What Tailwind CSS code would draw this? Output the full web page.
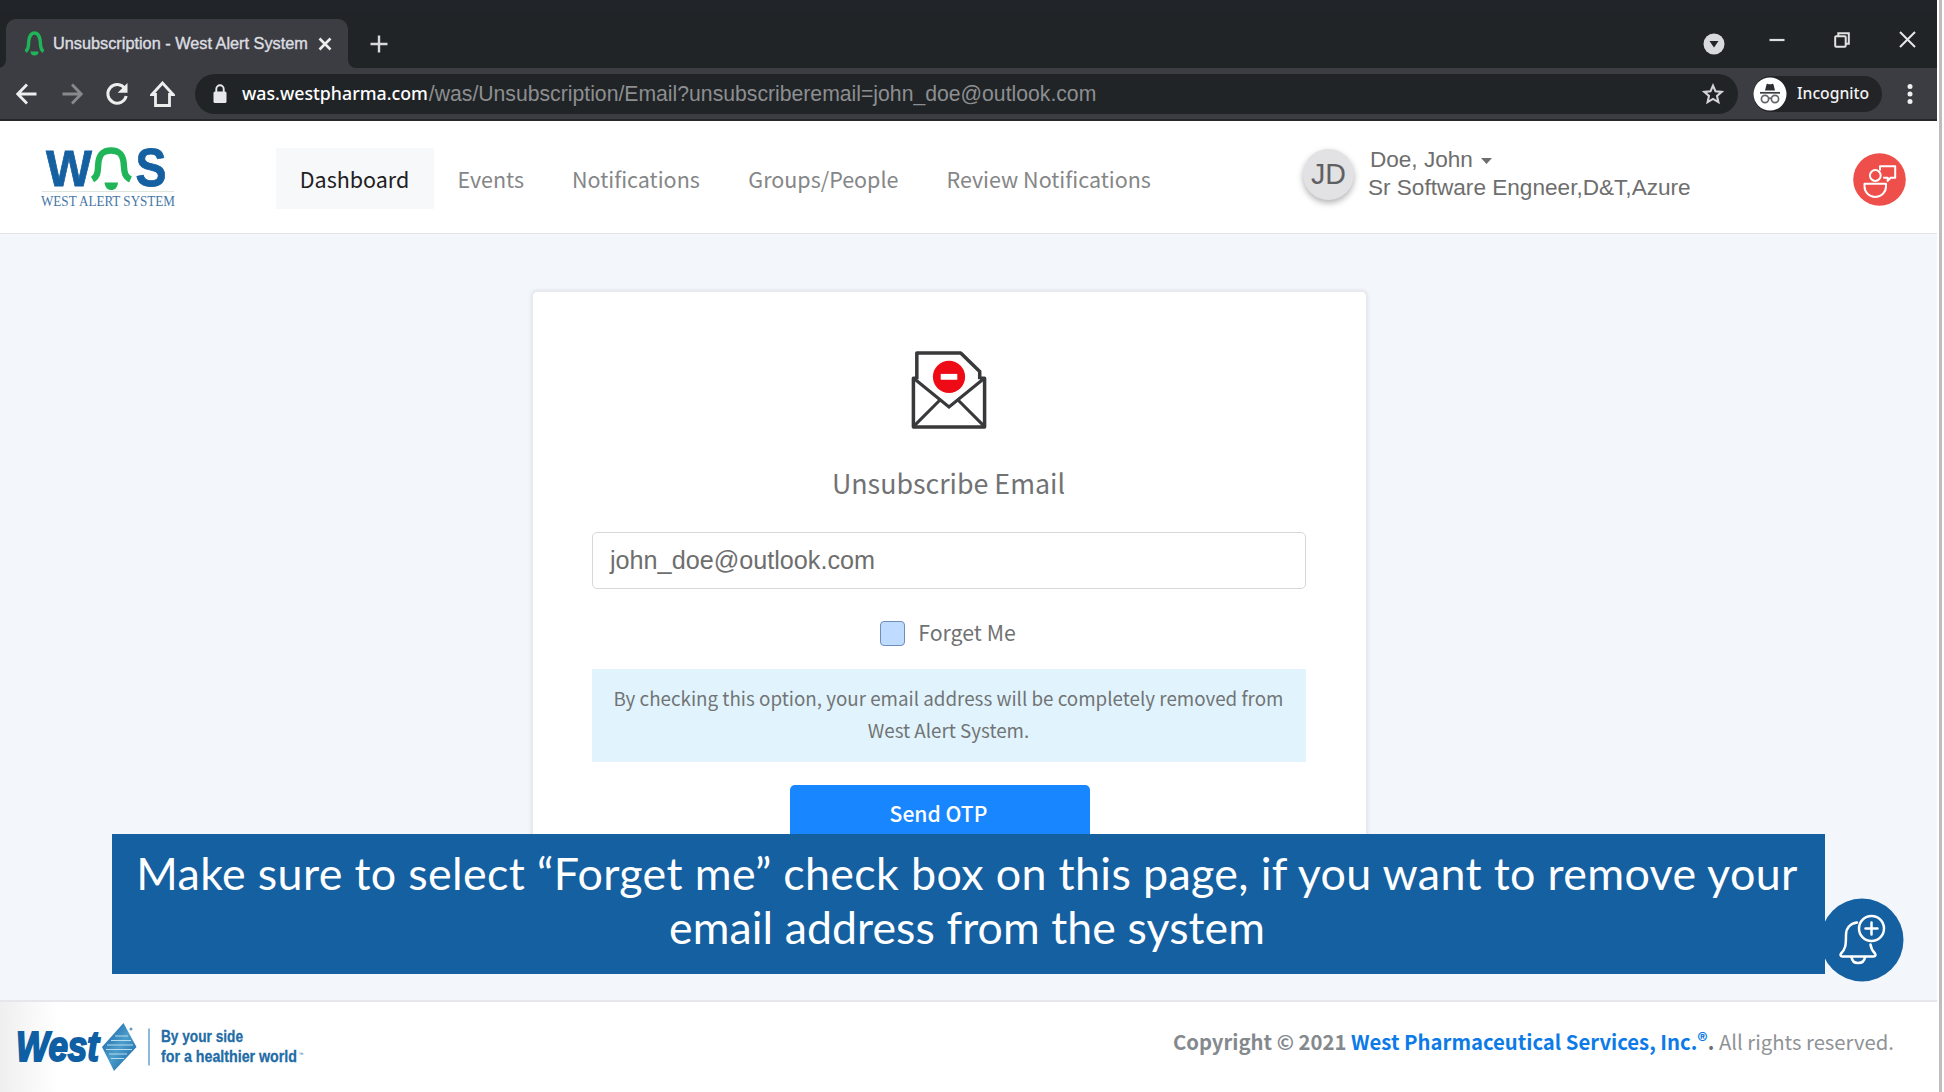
<!DOCTYPE html>
<html lang="en">
<head>
<meta charset="utf-8">
<title>Unsubscription - West Alert System</title>
<script src="https://cdn.jsdelivr.net/npm/@tailwindcss/browser@4"></script>
</head>
<body class="bg-white overflow-hidden font-['Noto_Sans_CJK_SC',sans-serif]">
<div class="relative flex h-[1092px] w-[1944px]">
<div class="flex h-full w-[1937px] flex-col">

  <!-- tab strip -->
  <div class="flex h-[68px] shrink-0 items-end bg-[#202427] pl-[6px] border-t-[14px] border-[#212429]">
    <div class="relative flex h-[49px] w-[342px] items-center rounded-t-[10px] bg-[#3c3d42] pl-[18px]">
      <svg class="h-[26px] w-[21px] shrink-0" viewBox="0 0 21 26" fill="none"><path d="M1.500 20.500C5.500 18 4 13.500 5 8.500C6 3.500 8 2 10.500 2S15 3.500 16 8.500C17 13.500 15.500 18 19.500 20.500" stroke="#1fb457" stroke-width="3.400"/><path d="M6.500 20.500h8a4 4 0 0 1-8 0z" fill="#1fb457"/></svg>
      <span class="ml-[8px] text-[16.3px] leading-none whitespace-nowrap text-[#dcdde0] font-['Liberation_Sans',sans-serif] [-webkit-text-stroke:0.4px_#dcdde0]">Unsubscription - West Alert System</span>
      <svg class="ml-[10px] h-[14px] w-[14px] shrink-0" viewBox="0 0 14 14"><path d="M1.500 1.500l11 11M12.500 1.500l-11 11" stroke="#eee" stroke-width="2.600"/></svg>
      <svg class="absolute -right-[8px] bottom-0 h-2 w-2" viewBox="0 0 8 8"><path d="M0 0v8h8A8 8 0 0 1 0 0z" fill="#3c3d42"/></svg>
      <svg class="absolute -left-[6px] bottom-0 h-2 w-[6px]" viewBox="2 0 6 8"><path d="M8 0v8H0A8 8 0 0 0 8 0z" fill="#3c3d42"/></svg>
    </div>
    <div class="flex h-[49px] flex-1 items-center pl-[22px] pr-[21px]">
      <svg class="h-[18px] w-[18px]" viewBox="0 0 18 18"><path d="M9 .5v17M.5 9h17" stroke="#d8d9db" stroke-width="2.400"/></svg>
      <div class="flex-1"></div>
      <svg class="mr-[44px] h-[22px] w-[22px]" viewBox="0 0 22 22"><circle cx="11" cy="11" r="10.500" fill="#d9dae0"/><path d="M6.500 8h9L11 14.500z" fill="#202427"/></svg>
      <svg class="mb-[7px] mr-[49px] h-[16px] w-[16px]" viewBox="0 0 16 16"><path d="M.5 8h15" stroke="#dedede" stroke-width="2.200"/></svg>
      <svg class="mb-[8px] mr-[49px] h-[16px] w-[16px]" viewBox="0 0 16 16" fill="none" stroke="#e2e2e2" stroke-width="2"><rect x="1.200" y="4.300" width="10.500" height="10.500" rx="1"/><path d="M4.300 4V1.200h10.500v10.500H12"/></svg>
      <svg class="mb-[8px] h-[17px] w-[17px]" viewBox="0 0 17 17"><path d="M1 1l15 15M16 1L1 16" stroke="#e6e6e6" stroke-width="2"/></svg>
    </div>
  </div>

  <!-- toolbar -->
  <div class="flex h-[53px] shrink-0 items-center border-b-2 border-[#26272b] bg-[#3c3d42] pl-[16px]">
    <svg class="h-[22px] w-[21px]" viewBox="0 0 21 22" fill="none" stroke="#eeeeef" stroke-width="2.800"><path d="M20.500 11H2M11 1.500L1.800 11l9.200 9.500"/></svg>
    <svg class="ml-[25px] h-[22px] w-[21px]" viewBox="0 0 21 22" fill="none" stroke="#88898d" stroke-width="2.800"><path d="M.5 11H19M10 1.500L19.200 11 10 20.500"/></svg>
    <svg class="ml-[22px] h-[24px] w-[24px]" viewBox="0 0 24 24" fill="none"><path d="M19.800 6.500A9.300 9.300 0 1 0 21.200 14" stroke="#eeeeef" stroke-width="3"/><path d="M22.500 1v9.800h-9.800z" fill="#eeeeef"/></svg>
    <svg class="ml-[21px] h-[26px] w-[25px]" viewBox="0 0 25 26" fill="none" stroke="#eeeeef" stroke-width="2.800"><path d="M12.500 2L2 13.500h3.500V24.500h14V13.500H23z"/></svg>
    <div class="ml-[20px] flex h-[40px] w-[1543px] items-center rounded-full bg-[#202427] pl-[18px] pr-[14px]">
      <svg class="h-[20px] w-[14px]" viewBox="0 0 14 20"><rect x=".5" y="7.500" width="13" height="11.500" rx="1.500" fill="#e8e8ea"/><path d="M3.300 8V5a3.700 3.700 0 0 1 7.400 0v3" fill="none" stroke="#e8e8ea" stroke-width="1.900"/></svg>
      <span class="ml-[15px] text-[17.75px] leading-none font-medium text-white font-['Noto_Sans',sans-serif]">was.westpharma.com</span>
      <span class="ml-px text-[21.2px] leading-none whitespace-nowrap text-[#8d8e90] font-['Liberation_Sans',sans-serif]">/was/Unsubscription/Email?unsubscriberemail=john_doe@outlook.com</span>
      <div class="flex-1"></div>
      <svg class="h-[22px] w-[22px]" viewBox="0 0 22 22"><path d="M11 2.600l2.500 5.700 6.200.6-4.700 4.100 1.400 6.100L11 15.900l-5.400 3.200L7 13 2.300 8.900l6.200-.6z" fill="none" stroke="#d5d5d8" stroke-width="2.100"/></svg>
    </div>
    <div class="ml-[15px] flex h-[36px] w-[129px] items-center rounded-full bg-[#222427]">
      <svg class="h-[34px] w-[34px]" viewBox="0 0 34 34"><circle cx="17" cy="17" r="16.500" fill="#fff"/><path d="M12 13.500l1.500-6c.3-.8.9-.8 1.500-.6 1.400.5 2.600.5 4 0 .6-.2 1.200-.2 1.500.6l1.500 6z" fill="#2d2e31"/><path d="M7 15.800h20" stroke="#3c3d40" stroke-width="1.700"/><g fill="none" stroke="#66676b" stroke-width="1.700"><circle cx="12" cy="22" r="3.600"/><circle cx="22" cy="22" r="3.600"/><path d="M15.600 21.500q1.400-.9 2.800 0"/></g></svg>
      <span class="ml-[10px] text-[15.7px] leading-none font-medium text-[#f2f2f2] font-['Noto_Sans',sans-serif]">Incognito</span>
    </div>
    <svg class="ml-[25px] h-[20px] w-[6px]" viewBox="0 0 6 20" fill="#f0f0f0"><circle cx="3" cy="2.600" r="2.500"/><circle cx="3" cy="10" r="2.500"/><circle cx="3" cy="17.400" r="2.500"/></svg>
  </div>

  <!-- site header -->
  <header class="flex h-[113px] shrink-0 items-start border-b border-[#e3e4e8] bg-white pl-[40px]">
    <svg class="mt-[20px] h-[70px] w-[137px] shrink-0 overflow-visible" viewBox="0 0 137 70">
      <g fill="#1560a1" stroke="#1560a1" stroke-width=".8" font-family="Liberation Sans, sans-serif" font-weight="700"><text x="6" y="45" font-size="50" textLength="46" lengthAdjust="spacingAndGlyphs">W</text><text x="95.500" y="44.500" font-size="53" textLength="31" lengthAdjust="spacingAndGlyphs">S</text></g>
      <path d="M52.500 38.500C59 35 57.500 28 58.500 20.500C60 12 64 9.500 71 9.500S82 12 83.500 20.500C84.500 28 83 35 90.500 38.500" fill="none" stroke="#20b558" stroke-width="6.400"/>
      <path d="M64.500 41.500h13.500c-.5 5-3 7.500-6.700 7.500s-6.300-2.500-6.800-7.500z" fill="#20b558"/>
      <path d="M2 50.500h132" stroke="#dce6dc"/>
      <text x="1" y="64.500" font-family="Liberation Serif, serif" font-size="15" fill="#4676a8" textLength="134" lengthAdjust="spacingAndGlyphs">WEST ALERT SYSTEM</text>
    </svg>
    <nav class="mt-[27px] ml-[99px] flex h-[61px] items-center text-[21.5px] leading-none text-[#858687] whitespace-nowrap">
      <a class="flex h-[61px] w-[158px] items-center justify-center bg-[#f6f8fa] pr-px text-[#1f2021]">Dashboard</a>
      <a class="ml-[23.5px]">Events</a>
      <a class="ml-[48px]">Notifications</a>
      <a class="ml-[48.5px]">Groups/People</a>
      <a class="ml-[48px]">Review Notifications</a>
    </nav>
    <div class="mt-[27px] ml-[152px] flex shrink-0 items-start font-['Liberation_Sans',sans-serif] text-[#6e6e6e]">
      <div class="mt-px flex h-[51px] w-[51px] items-center justify-center rounded-full bg-[#e2e1e4] text-[28.6px] text-[#5f6061] shadow-[0_3px_6px_rgba(0,0,0,0.3)]">JD</div>
      <div class="ml-[14px] text-[22.6px] leading-[27.5px] whitespace-nowrap -mt-[2px]">
        <div class="flex items-center pl-[2px]">Doe, John<svg class="ml-[8px] mt-[3px] h-[6px] w-[11px]" viewBox="0 0 11 6"><path d="M0 0h11L5.500 6z" fill="#6e6e6e"/></svg></div>
        <div>Sr Software Engneer,D&amp;T,Azure</div>
      </div>
    </div>
    <svg class="mt-[32px] mr-[31px] ml-auto h-[53px] w-[53px] shrink-0" viewBox="0 0 53 53"><circle cx="26.500" cy="26.500" r="26.300" fill="#ee4f4b"/><g fill="none" stroke="#fff" stroke-width="2" stroke-linejoin="round"><circle cx="22.300" cy="22.500" r="5.400"/><path d="M11.500 30.800h21.500v2.500a10.700 10.700 0 0 1-21.500 0z"/><path d="M27 17.500v-4.300h15.200v11.500h-4.500l-3 3.200v-3.200h-4.500"/></g></svg>
  </header>

  <!-- page body -->
  <main class="flex h-[766px] shrink-0 justify-center bg-[#f3f7fb] pt-[57px] pr-[39px]">
    <section class="flex h-[660px] w-[835px] flex-col items-center rounded-[5px] border border-[#e9eaee] bg-white shadow-[0_0_4px_rgba(0,0,0,0.13)]">
      <svg class="mt-[57px] mr-px h-[82px] w-[78px] shrink-0" viewBox="0 0 80 84" fill="none">
        <path d="M7 31V4h45l19.500 19v8" stroke="#38393a" stroke-width="3.600" stroke-linejoin="round"/>
        <path d="M7 30H3.500v50h73V30H72" stroke="#38393a" stroke-width="3.600" stroke-linejoin="round"/>
        <path d="M5 31l35 28.500L75 31M3.500 79.500L31 52M76.500 79.500L49 52" stroke="#38393a" stroke-width="3.200"/>
        <circle cx="40" cy="28.500" r="16.500" fill="#ee0b16"/><rect x="31.500" y="25.500" width="17" height="6" fill="#fff"/>
      </svg>
      <h1 class="mt-[37px] mr-px h-[30px] text-[26.8px] leading-[30px] text-[#717273]">Unsubscribe Email</h1>
      <div class="mt-[34px] flex h-[57px] w-[714px] shrink-0 items-center rounded-[5px] border-[1.5px] border-[#d6d7db] pl-[17px] text-[25.2px] text-[#6e6e6e] font-['Liberation_Sans',sans-serif]">john_doe@outlook.com</div>
      <label class="mt-[28px] mr-[2px] flex h-[30px] items-center text-[21.3px] leading-none text-[#717273]"><span class="mt-[2px] mr-[13px] h-[25px] w-[25px] rounded-[4px] border-[1.5px] border-[#6f8fbb] bg-[#bfdcff]"></span>Forget Me</label>
      <p class="mt-[22px] flex h-[93px] w-[714px] shrink-0 flex-col items-center justify-center bg-[#e1f4fd] pb-[3px] pr-px text-[18.8px] leading-[31.7px] whitespace-nowrap text-[#717476]"><span>By checking this option, your email address will be completely removed from</span><span>West Alert System.</span></p>
      <button class="mt-[23px] mr-[19px] h-[57px] w-[300px] shrink-0 rounded-[5px] bg-[#1886ff] pr-[2px] text-[21.1px] leading-none font-medium text-white">Send OTP</button>
    </section>
  </main>

  <footer class="flex h-[92px] shrink-0 items-center border-t-2 border-[#e6e7eb] bg-linear-to-r from-[#efefef] to-white to-[3%] pl-[15px] pr-[43px] text-[20.3px] leading-none">
    <svg class="mt-[3px] h-[52px] w-[300px] shrink-0 overflow-visible" viewBox="0 0 300 52">
      <defs><linearGradient id="g" x1="0" y1="0" x2="1" y2="1"><stop offset="0" stop-color="#0a5b9f"/><stop offset=".5" stop-color="#4d9dcb"/><stop offset="1" stop-color="#0a5b9f"/></linearGradient></defs>
      <text x="1" y="37.500" font-family="Liberation Sans, sans-serif" font-weight="700" font-style="italic" font-size="42" fill="#0e5fa3" stroke="#0e5fa3" stroke-width="2" textLength="83" lengthAdjust="spacingAndGlyphs">West</text>
      <path d="M108.500 0L121.500 24 99 48 87 24z" fill="url(#g)"/>
      <path d="M100 13h13M96 17.500h20M92 22h26M91 26.500h26M94 31h18M96 35.500h13" stroke="#b5dcef" stroke-width="1"/>
      <circle cx="116" cy="6" r="1.500" fill="#5f9ac4"/>
      <path d="M134 5.500v37" stroke="#8fb9d8" stroke-width="2"/>
      <g font-family="Liberation Sans, sans-serif" font-weight="700" font-size="17" fill="#1f6ca6" stroke="#1f6ca6" stroke-width=".3"><text x="146" y="18.500" textLength="82" lengthAdjust="spacingAndGlyphs">By your side</text><text x="146" y="39" textLength="136" lengthAdjust="spacingAndGlyphs">for a healthier world</text></g>
      <text x="283.500" y="33" font-family="Liberation Sans, sans-serif" font-size="5" fill="#1f6ca6">™</text>
    </svg>
    <div class="ml-auto mb-[11px] flex whitespace-pre text-[#8f9396]"><b class="text-[#84898e]">Copyright © 2021 </b><b class="text-[#0c7be8]">West Pharmaceutical Services, Inc.</b><b class="-mt-px text-[20.3px] text-[#0c7be8]">®</b><b class="text-[#6d7175]">. </b><span>All rights reserved.</span></div>
  </footer>
</div>

<div class="ml-[2px] h-full w-[3px] bg-[#bdbdbd]"></div>

<!-- floating subscribe button -->
<svg class="absolute left-[1820px] top-[898px] h-[84px] w-[84px]" viewBox="0 0 84 84"><circle cx="42" cy="42" r="41.500" fill="#1560a1"/><g fill="none" stroke="#fff" stroke-width="2.500" stroke-linecap="round" stroke-linejoin="round"><path d="M37 24.500c-7.500 1-11 6.500-11 12.500 0 10.500-.5 14-5 18.500-1 1.500-.5 3 1.500 3h31c2 0 2.500-1.500 1.500-3-2.500-2.500-4-5-4.500-9"/><path d="M31.500 59c.5 4 3 6 6.500 6s6.500-2 7-6"/><circle cx="51.500" cy="30.500" r="12.500"/><path d="M51.500 24.500v12M45.500 30.500h12"/></g></svg>

<!-- caption -->
<div class="absolute left-[112px] top-[834px] flex h-[140px] w-[1713px] flex-col items-center bg-[#1560a1] pt-[13px] pr-[3px] leading-[53px] whitespace-nowrap text-white font-['Lato',sans-serif]"><span class="text-[44.8px] tracking-[0.35px]">Make sure to select “Forget me” check box on this page, if you want to remove your</span><span class="text-[44.6px] tracking-[0.1px]">email address from the system</span></div>
</div>
</body>
</html>
